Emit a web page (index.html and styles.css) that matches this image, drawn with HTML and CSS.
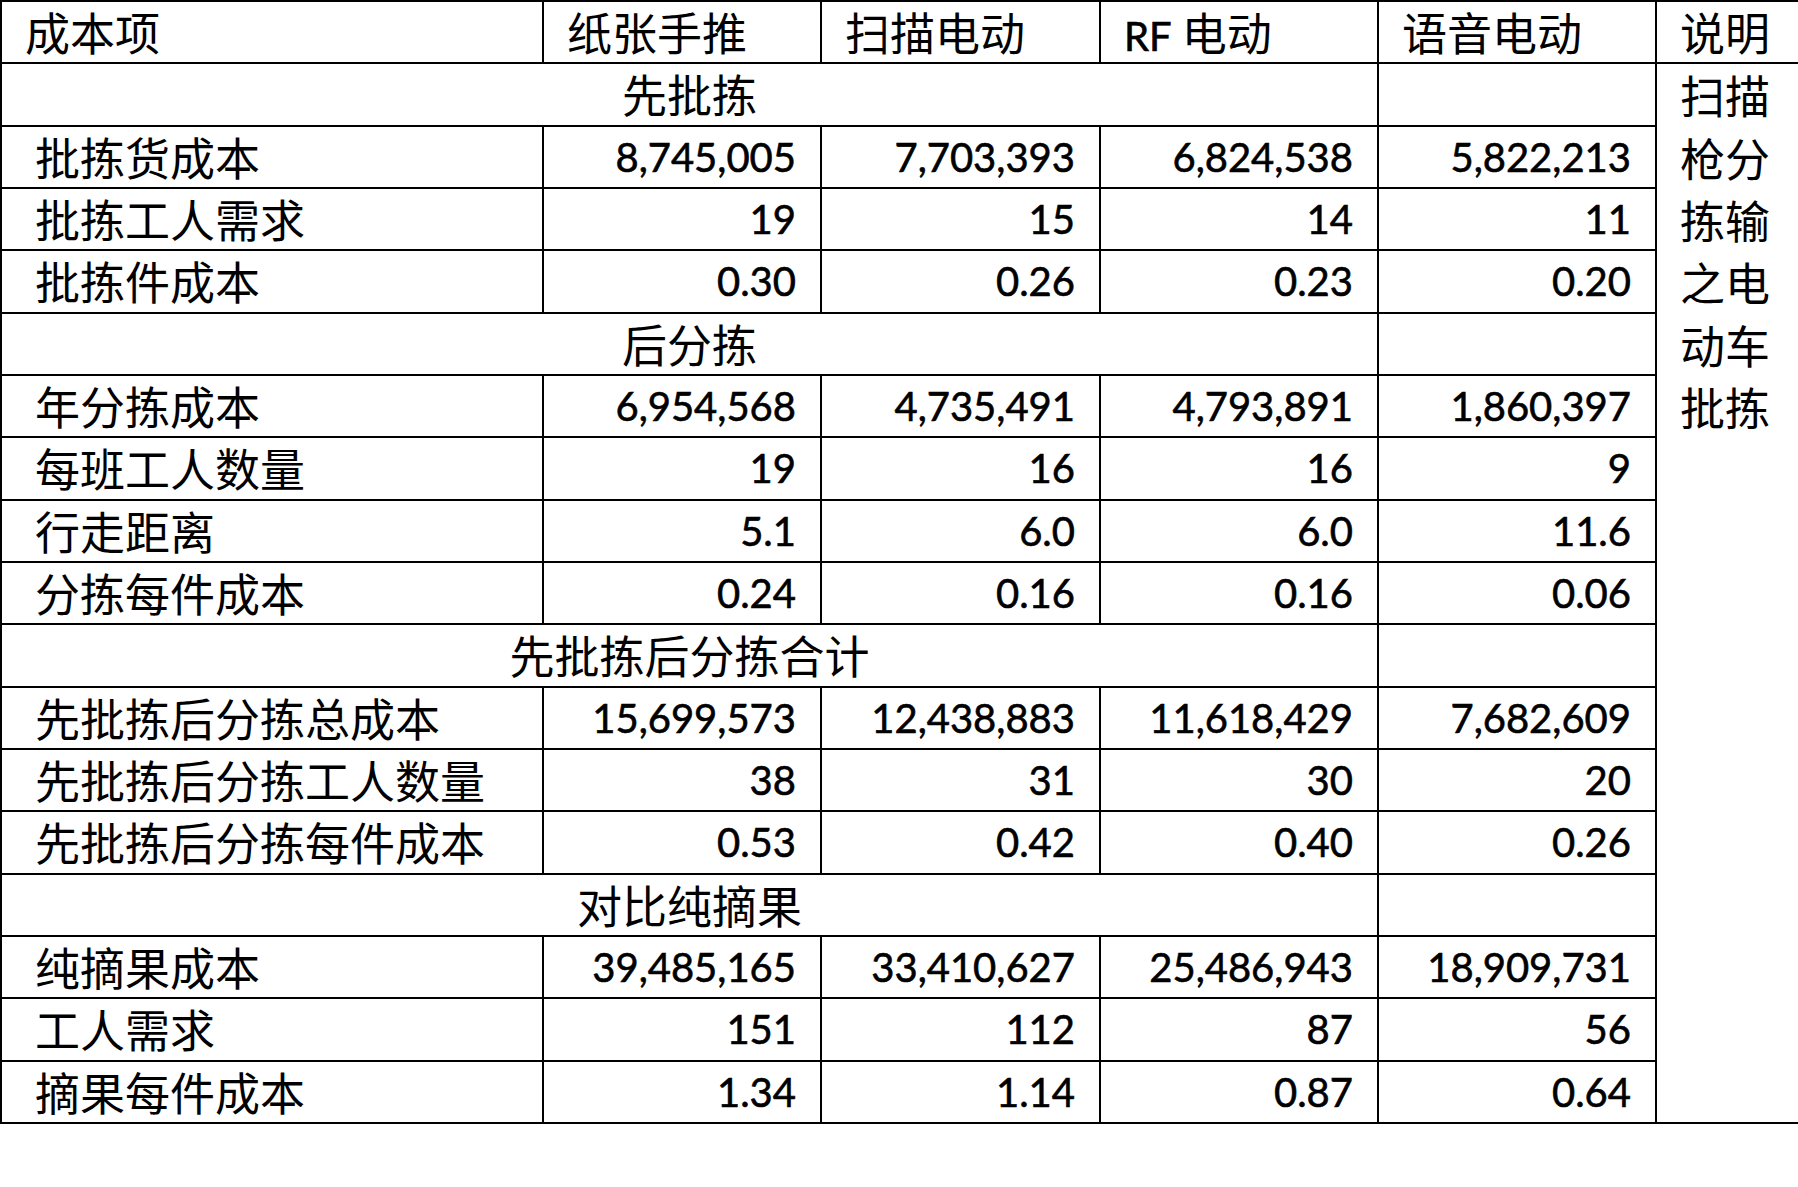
FILE: index.html
```html
<!DOCTYPE html>
<html lang="zh-CN">
<head>
<meta charset="utf-8">
<title>成本对比</title>
<link rel="stylesheet" href="styles.css">
</head>
<body>
<table class="sheet">
  <colgroup>
    <col class="c-label">
    <col class="c-a">
    <col class="c-b">
    <col class="c-c">
    <col class="c-d">
    <col class="c-note">
  </colgroup>
  <tbody>
    <tr>
      <td class="hd">成本项</td>
      <td class="hd">纸张手推</td>
      <td class="hd">扫描电动</td>
      <td class="hd"><span class="lat">RF</span> 电动</td>
      <td class="hd">语音电动</td>
      <td class="hd">说明</td>
    </tr>
    <tr>
      <td class="sec" colspan="4">先批拣</td>
      <td></td>
      <td class="note" rowspan="17"><div class="note-text">扫描枪分拣输之电动车批拣</div></td>
    </tr>
    <tr><td class="lbl">批拣货成本</td><td class="num">8,745,005</td><td class="num">7,703,393</td><td class="num">6,824,538</td><td class="num">5,822,213</td></tr>
    <tr><td class="lbl">批拣工人需求</td><td class="num">19</td><td class="num">15</td><td class="num">14</td><td class="num">11</td></tr>
    <tr><td class="lbl">批拣件成本</td><td class="num">0.30</td><td class="num">0.26</td><td class="num">0.23</td><td class="num">0.20</td></tr>
    <tr><td class="sec" colspan="4">后分拣</td><td></td></tr>
    <tr><td class="lbl">年分拣成本</td><td class="num">6,954,568</td><td class="num">4,735,491</td><td class="num">4,793,891</td><td class="num">1,860,397</td></tr>
    <tr><td class="lbl">每班工人数量</td><td class="num">19</td><td class="num">16</td><td class="num">16</td><td class="num">9</td></tr>
    <tr><td class="lbl">行走距离</td><td class="num">5.1</td><td class="num">6.0</td><td class="num">6.0</td><td class="num">11.6</td></tr>
    <tr><td class="lbl">分拣每件成本</td><td class="num">0.24</td><td class="num">0.16</td><td class="num">0.16</td><td class="num">0.06</td></tr>
    <tr><td class="sec" colspan="4">先批拣后分拣合计</td><td></td></tr>
    <tr><td class="lbl">先批拣后分拣总成本</td><td class="num">15,699,573</td><td class="num">12,438,883</td><td class="num">11,618,429</td><td class="num">7,682,609</td></tr>
    <tr><td class="lbl">先批拣后分拣工人数量</td><td class="num">38</td><td class="num">31</td><td class="num">30</td><td class="num">20</td></tr>
    <tr><td class="lbl">先批拣后分拣每件成本</td><td class="num">0.53</td><td class="num">0.42</td><td class="num">0.40</td><td class="num">0.26</td></tr>
    <tr><td class="sec" colspan="4">对比纯摘果</td><td></td></tr>
    <tr><td class="lbl">纯摘果成本</td><td class="num">39,485,165</td><td class="num">33,410,627</td><td class="num">25,486,943</td><td class="num">18,909,731</td></tr>
    <tr><td class="lbl">工人需求</td><td class="num">151</td><td class="num">112</td><td class="num">87</td><td class="num">56</td></tr>
    <tr><td class="lbl">摘果每件成本</td><td class="num">1.34</td><td class="num">1.14</td><td class="num">0.87</td><td class="num">0.64</td></tr>
  </tbody>
</table>
</body>
</html>
```

FILE: styles.css
```css
html, body {
  margin: 0;
  padding: 0;
  background: #fff;
  overflow: hidden;
}

.sheet {
  border-collapse: collapse;
  table-layout: fixed;
  width: 1825px;
  font-family: "Noto Sans CJK SC", "Noto Sans", sans-serif;
  font-size: 45px;
  color: #000;
}

.c-label { width: 542px; }
.c-a { width: 278px; }
.c-b { width: 279px; }
.c-c { width: 278px; }
.c-d { width: 278px; }
.c-note { width: 170px; }

.sheet tr {
  height: 62.33px;
}

.sheet td {
  border: 2px solid #000;
  padding: 0;
  line-height: 1.2;
  white-space: nowrap;
  vertical-align: middle;
}

.hd {
  padding-left: 23px !important;
  text-align: left;
}

.lat {
  font-family: "Lato", "Liberation Sans", sans-serif;
  font-size: 40px;
  -webkit-text-stroke: 0.6px #000;
}

.lbl {
  padding-left: 33px !important;
  text-align: left;
}

.sec {
  text-align: center;
}

.num {
  font-family: "Lato", "Liberation Sans", sans-serif;
  font-size: 40px;
  text-align: right;
  padding-right: 24px !important;
  -webkit-text-stroke: 0.6px #000;
}

.sheet td.note {
  vertical-align: top;
  padding-left: 23px;
  white-space: normal;
}

.note-text {
  width: 92px;
  line-height: 62.33px;
  word-break: break-all;
}
```
